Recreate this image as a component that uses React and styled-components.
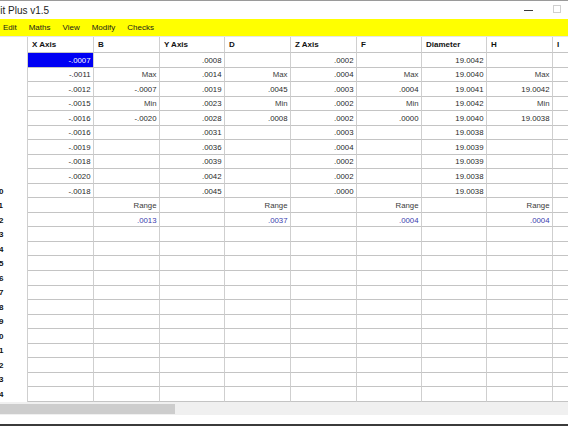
import React from "react";
import styled, { createGlobalStyle } from "styled-components";

const Global = createGlobalStyle`
  html, body { margin: 0; padding: 0; background: #ffffff; }
  body { width: 568px; height: 426px; overflow: hidden; }
  #root { width: 568px; height: 426px; }
`;

const Viewport = styled.div`
  width: 568px;
  height: 426px;
  overflow: hidden;
  display: flex;
  flex-direction: column;
  background: #fff;
  font-family: "Liberation Sans", Arial, sans-serif;
`;

const Window = styled.div`
  margin-left: -30px;
  width: 630px;
  flex: 1;
  display: flex;
  flex-direction: column;
  min-height: 0;
`;

const TitleBar = styled.div`
  height: 19px;
  box-sizing: border-box;
  border-top: 1px solid #9a9a9a;
  display: flex;
  align-items: center;
  padding-left: 18px;
  font-size: 10px;
  color: #1e1e1e;
`;

const Title = styled.span`
  flex: 1;
  white-space: nowrap;
`;

const CaptionButton = styled.div`
  width: 28.5px;
  height: 18px;
  display: flex;
  align-items: center;
  justify-content: center;
`;

const MinGlyph = styled.div`
  width: 9px;
  height: 1px;
  background: #3a3a3a;
`;

const MaxGlyph = styled.div`
  width: 6px;
  height: 6px;
  border: 1px solid #cfcfcf;
  margin-top: -2px;
`;

const CloseGlyph = styled.div`
  font-size: 10px;
  color: #333;
`;

const MenuBar = styled.div`
  height: 17px;
  background: #ffff00;
  display: flex;
  align-items: center;
  padding-left: 2px;
  border-bottom: 1px solid #e6e6e6;
`;

const MenuItem = styled.span`
  padding: 0 6px;
  font-size: 8px;
  color: #1a1a1a;
  white-space: nowrap;
`;

const Grid = styled.div`
  display: grid;
  grid-template-columns: 58px 66px 66px 65px 66px 66px 65px 65px 66px 66px;
  grid-template-rows: 16px repeat(24, 14.54px);
  overflow: hidden;
`;

const HeadCell = styled.div`
  box-sizing: border-box;
  border-right: 1px solid #d0d0d0;
  border-bottom: ${(p) => (p.$corner ? "none" : "1px solid #c4c4c4")};
  font-size: 8px;
  font-weight: bold;
  color: #111;
  padding-left: 4px;
  display: flex;
  align-items: center;
  white-space: nowrap;
`;

const RowHead = styled.div`
  box-sizing: border-box;
  border-right: 1px solid #cfcfcf;
  font-size: 8px;
  font-weight: bold;
  color: #111;
  padding-left: 24.5px;
  display: flex;
  align-items: center;
  white-space: nowrap;
`;

const colorFor = (kind) =>
  kind === "range" ? "#3c3cae" : kind === "label" ? "#3a3a3a" : "#2a2a2a";

const Cell = styled.div`
  box-sizing: border-box;
  border-right: 1px solid #cfcfcf;
  border-bottom: 1px solid #c4c4c4;
  background: ${(p) => (p.$selected ? "#0000f4" : "#fff")};
  color: ${(p) => (p.$selected ? "#ffffff" : colorFor(p.$kind))};
  font-size: 7.8px;
  display: flex;
  align-items: center;
  justify-content: flex-end;
  padding-right: 2.5px;
  padding-top: 1px;
  white-space: nowrap;
`;

const ScrollBar = styled.div`
  height: 13px;
  box-sizing: border-box;
  background: #f0f0f0;
  padding: 2px 0 1px 0;
  display: flex;
`;

const Thumb = styled.div`
  width: 205px;
  background: #cdcdcd;
`;

const BottomGap = styled.div`
  flex: 1;
  background: #ffffff;
`;

const BottomEdge = styled.div`
  height: 2px;
  background: #3b3b3b;
  margin-left: 30px;
`;

const headers = ["X Axis", "B", "Y Axis", "D", "Z Axis", "F", "Diameter", "H", "I"];

const xAxis = ["-.0007", "-.0011", "-.0012", "-.0015", "-.0016", "-.0016", "-.0019", "-.0018", "-.0020", "-.0018"];
const yAxis = [".0008", ".0014", ".0019", ".0023", ".0028", ".0031", ".0036", ".0039", ".0042", ".0045"];
const zAxis = [".0002", ".0004", ".0003", ".0002", ".0002", ".0003", ".0004", ".0002", ".0002", ".0000"];
const dia = ["19.0042", "19.0040", "19.0041", "19.0042", "19.0040", "19.0038", "19.0039", "19.0039", "19.0038", "19.0038"];

const stats = (max, min, range) => {
  const col = Array(24).fill(null);
  col[1] = { t: "Max", k: "label" };
  col[2] = { t: max, k: "value" };
  col[3] = { t: "Min", k: "label" };
  col[4] = { t: min, k: "value" };
  col[10] = { t: "Range", k: "label" };
  col[11] = { t: range, k: "range" };
  return col;
};

const values = (arr) => {
  const col = Array(24).fill(null);
  arr.forEach((v, i) => (col[i] = { t: v, k: "value" }));
  return col;
};

const columns = [
  values(xAxis),
  stats("-.0007", "-.0020", ".0013"),
  values(yAxis),
  stats(".0045", ".0008", ".0037"),
  values(zAxis),
  stats(".0004", ".0000", ".0004"),
  values(dia),
  stats("19.0042", "19.0038", ".0004"),
  Array(24).fill(null),
];

const menus = ["File", "Edit", "Maths", "View", "Modify", "Checks"];

export default function App() {
  return (
    <>
      <Global />
      <Viewport>
        <Window>
          <TitleBar>
            <Title>Edit Plus v1.5</Title>
            <CaptionButton><MinGlyph /></CaptionButton>
            <CaptionButton><MaxGlyph /></CaptionButton>
            <CaptionButton><CloseGlyph>✕</CloseGlyph></CaptionButton>
          </TitleBar>
          <MenuBar>
            {menus.map((m) => (
              <MenuItem key={m}>{m}</MenuItem>
            ))}
          </MenuBar>
          <Grid>
            <HeadCell $corner />
            {headers.map((h) => (
              <HeadCell key={h}>{h}</HeadCell>
            ))}
            {Array.from({ length: 24 }, (_, r) => (
              <React.Fragment key={r}>
                <RowHead>{r + 1}</RowHead>
                {columns.map((col, c) => {
                  const v = col[r];
                  return (
                    <Cell key={c} $kind={v ? v.k : "value"} $selected={r === 0 && c === 0}>
                      {v ? v.t : ""}
                    </Cell>
                  );
                })}
              </React.Fragment>
            ))}
          </Grid>
          <ScrollBar>
            <Thumb />
          </ScrollBar>
          <BottomGap />
          <BottomEdge />
        </Window>
      </Viewport>
    </>
  );
}
